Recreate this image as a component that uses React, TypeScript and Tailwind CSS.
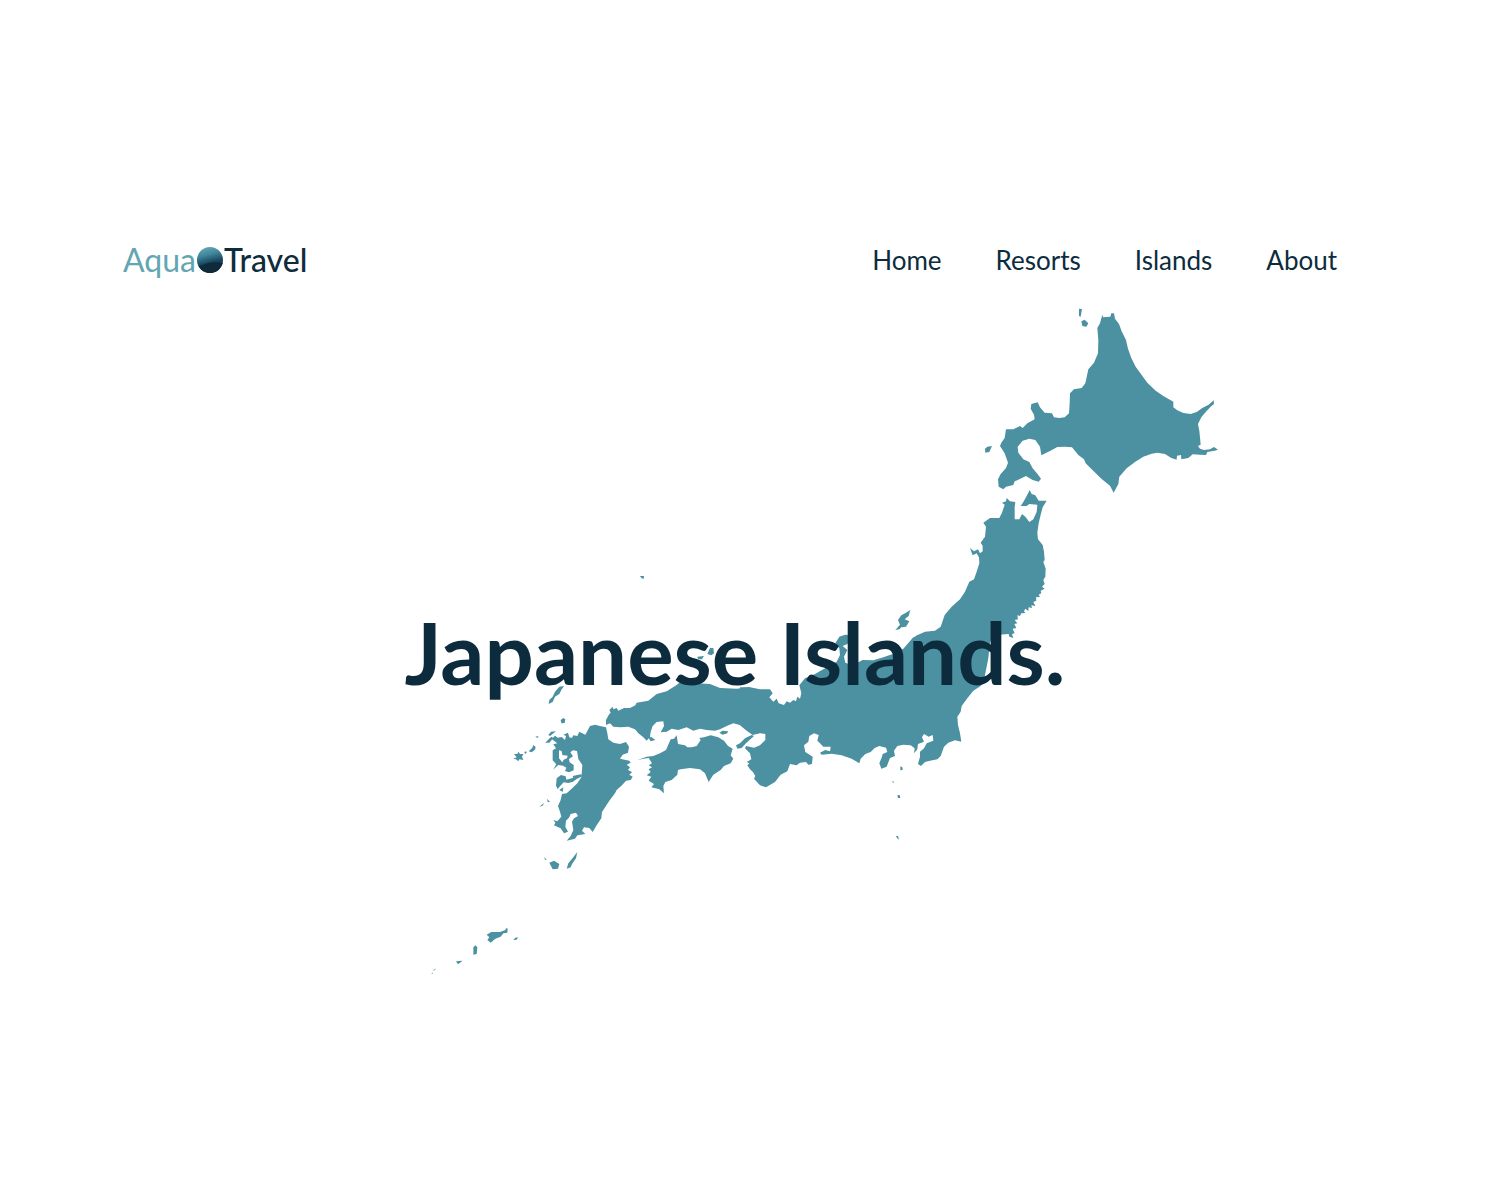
const links = ["Home", "Resorts", "Islands", "About"];

function Logo() {
  return (
    <a href="#home" aria-label="AquaTravel" className="flex items-center text-[32px] leading-8">
      <span className="text-[#62a6b2]">Aqua</span>
      <svg viewBox="0 0 26 26" className="mx-px size-[26px]" aria-hidden="true">
        <defs>
          <linearGradient id="sea" x1="0.35" y1="0" x2="0.6" y2="1">
            <stop offset="0" stopColor="#62a6b4" />
            <stop offset="0.3" stopColor="#3f8499" />
            <stop offset="0.6" stopColor="#17465f" />
            <stop offset="1" stopColor="#0c2638" />
          </linearGradient>
          <clipPath id="disc">
            <circle cx="13" cy="13" r="13" />
          </clipPath>
        </defs>
        <g clipPath="url(#disc)">
          <rect width="26" height="26" fill="url(#sea)" />
          <path d="M0 19 Q5 19 8 17 Q14 14 26 16 V26 H0z" fill="#0e2a3b" />
        </g>
      </svg>
      <span className="font-medium text-[#0f2c3c]">Travel</span>
    </a>
  );
}

/* Each group of islands is drawn on its own grid of three units to the pixel. */
function JapanMap() {
  return (
    <svg
      viewBox="270 300 960 700"
      className="col-start-1 row-start-1 w-full"
      fill="#4c91a1"
      role="img"
      aria-label="Map of Japan"
    >
      {/* Hokkaido */}
      <g transform="translate(970 300) scale(0.33333)">
        <path d="M397 44 L399 52 L421 50 L424 40 L432 40 L435 56 L447 72 L455 94 L468 120 L474 146 L484 174 L497 200 L515 225 L532 248 L557 272 L580 288 L610 305 L610 322 L622 331 L640 339 L662 342 L680 336 L697 324 L716 314 L731 301 L732 312 L722 320 L707 336 L694 352 L684 372 L688 392 L690 412 L692 434 L684 438 L690 446 L702 450 L720 448 L732 441 L744 449 L734 452 L712 456 L708 465 L690 464 L668 463 L655 474 L634 478 L633 465 L621 467 L620 479 L604 474 L585 462 L562 458 L545 461 L520 470 L496 485 L470 505 L448 530 L445 552 L431 578 L420 557 L395 537 L365 508 L347 490 L342 478 L325 465 L306 442 L285 440 L262 441 L240 453 L214 466 L210 440 L196 420 L178 416 L158 422 L143 440 L145 458 L160 478 L178 486 L188 505 L202 521 L213 536 L206 545 L188 540 L168 528 L148 538 L134 544 L130 555 L108 560 L100 568 L86 560 L84 538 L92 522 L108 504 L114 488 L104 460 L90 438 L94 428 L104 414 L108 388 L130 388 L150 378 L158 384 L172 370 L194 358 L192 344 L182 326 L184 312 L203 307 L210 322 L224 338 L246 340 L252 352 L268 354 L284 352 L297 340 L299 310 L300 280 L312 268 L335 264 L346 250 L355 208 L372 188 L384 160 L385 120 L382 84 L390 70Z" />
        <path d="M327 26 L336 27 L332 50 L327 48Z M334 64 L344 59 L355 70 L349 80 L337 78Z M45 446 L52 440 L66 438 L58 456 L46 458Z" />
      </g>
      {/* Tohoku */}
      <g transform="translate(880 480) scale(0.33333)">
        <path d="M449 30 L455 42 L466 46 L476 62 L500 62 L488 82 L482 104 L476 130 L472 158 L474 178 L488 195 L492 215 L494 240 L490 246 L497 266 L496 290 L490 300 L494 312 L486 320 L494 326 L482 332 L484 340 L476 344 L480 351 L468 352 L469 362 L460 366 L466 378 L454 376 L456 384 L446 382 L445 393 L436 386 L432 394 L436 399 L424 400 L420 408 L412 406 L414 418 L404 420 L412 430 L403 432 L409 444 L398 446 L404 460 L396 462 L400 474 L388 470 L386 462 L358 464 L345 465 L335 472 L330 486 L328 510 L300 560 L100 560 L75 504 L90 490 L108 467 L135 455 L165 452 L182 440 L194 405 L215 380 L240 358 L255 335 L268 305 L282 298 L290 275 L298 250 L297 232 L290 220 L278 226 L270 204 L282 214 L294 208 L300 220 L308 214 L308 198 L302 188 L315 170 L318 140 L310 128 L330 114 L358 114 L366 98 L374 74 L366 68 L378 64 L380 54 L390 64 L406 66 L404 80 L404 118 L418 118 L426 102 L436 110 L448 126 L460 118 L470 96 L472 74 L448 72 L440 78 L422 78 L430 66 L440 48Z" />
      </g>
      {/* Central Honshu */}
      <g transform="translate(740 600) scale(0.33333)">
        <path d="M0 262 L30 262 L60 268 L90 268 L98 280 L88 292 L100 305 L110 296 L116 310 L132 315 L140 304 L150 308 L160 300 L168 304 L172 290 L180 296 L184 280 L178 256 L195 235 L225 222 L250 208 L290 185 L300 165 L298 145 L286 130 L298 110 L315 104 L345 106 L348 122 L330 126 L322 132 L308 138 L322 150 L312 170 L316 188 L335 196 L352 188 L368 180 L400 181 L430 172 L465 160 L490 146 L520 112 L600 90 L760 90 L762 108 L750 125 L748 145 L745 175 L738 210 L732 240 L722 258 L700 272 L682 295 L665 318 L662 335 L652 350 L654 375 L660 400 L664 425 L645 421 L625 428 L612 440 L602 468 L592 478 L570 482 L555 486 L543 498 L534 492 L540 470 L540 455 L552 445 L560 430 L580 422 L578 405 L566 410 L552 402 L546 412 L552 425 L534 432 L532 448 L522 460 L524 445 L512 436 L490 434 L472 438 L462 452 L465 468 L450 474 L440 500 L424 506 L418 490 L426 470 L428 462 L442 456 L438 443 L418 438 L404 444 L392 456 L376 462 L362 476 L358 490 L335 476 L305 466 L275 461 L245 464 L240 458 L256 450 L270 454 L272 440 L250 440 L240 430 L232 422 L236 405 L222 400 L208 408 L205 425 L192 436 L196 456 L218 470 L216 492 L205 494 L198 486 L180 488 L170 496 L150 492 L142 514 L122 524 L105 546 L78 562 L60 556 L42 536 L46 528 L38 515 L30 508 L22 496 L28 490 L20 486 L34 478 L30 460 L15 445 L18 438 L42 443 L60 436 L76 420 L76 402 L60 400 L38 405 L20 392 L0 376Z" />
        <path d="M-12 436 L0 430 L15 415 L35 405 L42 408 L18 430 L5 444 L-8 446Z M511 30 L506 48 L494 58 L508 64 L498 80 L484 82 L478 88 L466 90 L480 74 L474 60 L484 46 L498 38Z M481 499 L487 502 L488 510 L481 511Z M457 543 L462 545 L459 550Z M472 586 L479 585 L481 594 L474 594Z M468 708 L474 708 L477 719 L471 714Z" />
      </g>
      {/* Western Honshu, Shikoku and Kyushu */}
      <g transform="translate(500 680) scale(0.33333)">
        <path d="M780 30 L745 22 L710 26 L660 24 L630 12 L590 10 L550 -2 L530 15 L500 34 L470 42 L445 62 L410 68 L406 76 L390 84 L372 84 L355 92 L350 84 L340 88 L338 80 L328 90 L332 98 L326 105 L318 120 L318 135 L330 130 L340 140 L360 142 L385 140 L405 148 L415 160 L430 172 L440 182 L450 170 L452 155 L458 138 L470 126 L490 124 L492 138 L482 157 L500 155 L515 146 L535 150 L560 142 L580 152 L600 146 L620 150 L645 152 L660 148 L680 138 L700 130 L722 136 L750 142Z" />
        <path d="M512 178 L522 176 L530 166 L534 192 L555 196 L562 202 L575 202 L590 198 L602 180 L598 174 L612 172 L632 166 L655 172 L672 182 L684 198 L698 206 L692 226 L700 236 L692 250 L672 258 L662 270 L640 284 L626 306 L615 280 L600 268 L570 264 L542 268 L534 270 L532 284 L515 300 L496 306 L490 318 L492 340 L478 328 L454 322 L462 312 L446 302 L454 290 L440 286 L452 276 L446 268 L456 262 L446 256 L456 250 L446 234 L430 236 L412 240 L440 230 L460 228 L480 220 L498 210Z" />
        <path
          fillRule="evenodd"
          d="M270 138 L285 134 L300 138 L318 142 L322 160 L325 178 L340 188 L360 192 L378 186 L387 200 L384 218 L368 224 L360 236 L388 242 L392 248 L380 254 L390 262 L384 270 L396 276 L388 284 L398 290 L392 300 L378 302 L366 316 L350 330 L345 340 L328 362 L306 396 L304 415 L290 436 L278 456 L268 444 L252 442 L246 452 L256 462 L232 466 L225 476 L200 482 L212 468 L220 450 L216 425 L222 415 L234 408 L228 398 L212 402 L208 412 L198 422 L196 440 L204 455 L192 460 L182 445 L162 436 L166 428 L160 420 L172 424 L184 410 L180 395 L174 378 L182 360 L186 342 L200 340 L215 326 L232 310 L244 292 L246 270 L247 255 L235 237 L231 213 L219 211 L211 217 L219 229 L207 237 L209 247 L221 255 L221 271 L207 277 L195 273 L199 263 L189 257 L175 255 L159 269 L169 253 L158 241 L158 211 L168 205 L160 193 L172 190 L155 177 L165 167 L173 173 L185 171 L195 180 L198 168 L190 164 L204 158 L208 172 L216 174 L220 166 L232 168 L238 155 L256 164Z M177 211 L185 213 L187 225 L203 227 L201 235 L191 239 L187 247 L177 235Z"
        />
        <path d="M170 295 L183 285 L197 289 L199 299 L220 293 L218 288 L243 283 L247 289 L230 297 L219 305 L205 309 L191 307 L180 319 L173 327 L168 317Z M178 330 L190 322 L188 336Z M136 188 L146 178 L154 170 L160 174 L148 188Z M145 165 L153 155 L168 154 L150 168Z M40 236 L50 232 L42 222 L52 222 L55 215 L60 222 L70 222 L66 230 L70 240 L58 238 L55 244 L48 238Z M73 216 L78 214 L80 218 L75 222Z M86 214 L97 203 L100 195 L107 201 L105 209 L95 217Z M106 170 L116 168 L112 174Z M192 18 L178 20 L165 35 L158 50 L148 60 L146 72 L158 66 L165 50 L178 42 L184 30Z M182 120 L190 114 L196 118 L194 129 L184 130Z M118 380 L132 369 L128 377Z M140 356 L150 365 L144 367Z M148 548 L162 542 L178 552 L174 566 L158 568Z M232 516 L228 535 L216 552 L212 562 L200 566 L205 550 L215 538Z M132 532 L140 538 L136 540Z M658 158 L668 152 L684 154 L682 160 L668 164Z M444 170 L455 172 L466 180 L452 184Z M420 -312 L432 -312 L431 -303 L424 -306Z M630 -96 L640 -96 L642 -80 L634 -74 L622 -78Z M592 -70 L612 -72 L606 -62 L594 -62Z" />
      </g>
      {/* Amami and Okinawa */}
      <g transform="translate(420 910) scale(0.33333)">
        <path d="M200 74 L214 66 L240 66 L256 60 L258 54 L263 56 L262 68 L250 70 L242 80 L226 86 L212 98 L202 90 L208 82Z M280 90 L286 83 L294 82 L290 89Z M160 112 L166 106 L172 112 L170 132 L160 134Z M108 154 L128 152 L114 163Z M38 182 L48 175 L44 181Z M34 189 L39 188 L37 192Z" />
      </g>
    </svg>
  );
}

export default function App() {
  return (
    <div className="min-h-screen bg-white font-['Lato',sans-serif] text-[#0c2c3e]">
      <header className="flex items-center justify-between pt-[244px] pr-[163px] pl-[123px]">
        <Logo />
        <nav aria-label="Main">
          <ul className="flex gap-[54px] text-[26px] leading-8">
            {links.map((link) => (
              <li key={link}>
                <a href={`#${link.toLowerCase()}`}>{link}</a>
              </li>
            ))}
          </ul>
        </nav>
      </header>
      <main className="mx-auto mt-6 grid w-full max-w-[960px]">
        <JapanMap />
        <h1 className="z-10 col-start-1 row-start-1 mt-[296px] mr-[30px] text-center text-[87px] leading-[112px] font-bold whitespace-nowrap">
          Japanese Islands.
        </h1>
      </main>
    </div>
  );
}
